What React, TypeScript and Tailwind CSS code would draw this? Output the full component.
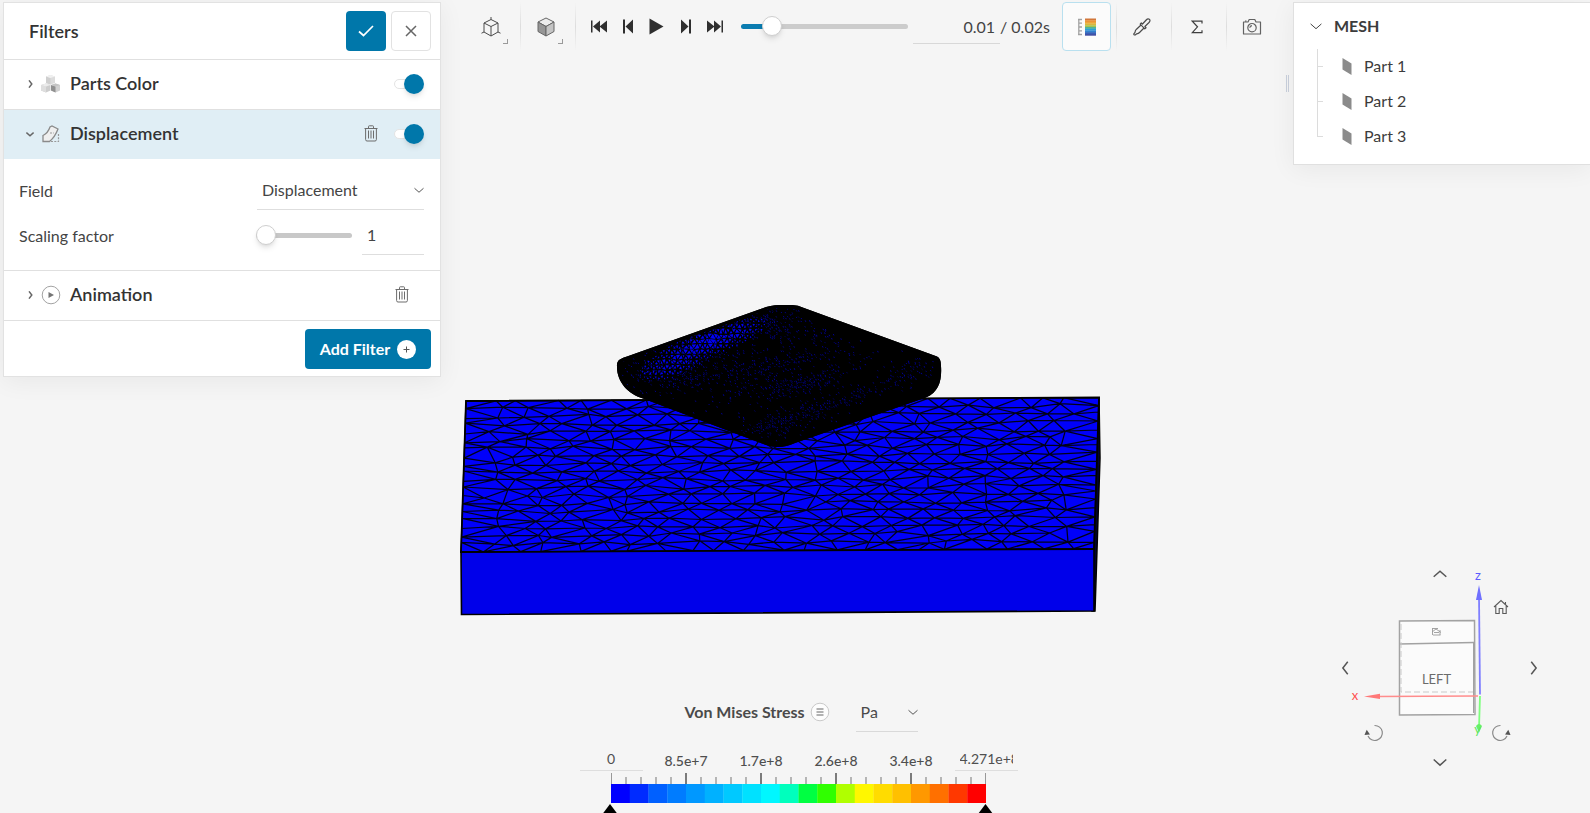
import React, { useState } from "react";

/* ---------- geometry helpers for the simulated mesh ---------- */

type Pt = [number, number];

function makeRandom(seed: number) {
  let s = seed;
  return () => {
    s = (s * 1664525 + 1013904223) % 4294967296;
    return s / 4294967296;
  };
}

function triangulate(points: Pt[]): number[][] {
  const n = points.length;
  const pts: Pt[] = [...points, [-3000, -3000], [6000, -3000], [10, 9000]];
  const circle = (a: number, b: number, c: number) => {
    const [ax, ay] = pts[a];
    const [bx, by] = pts[b];
    const [cx, cy] = pts[c];
    const d = 2 * (ax * (by - cy) + bx * (cy - ay) + cx * (ay - by)) || 1e-9;
    const a2 = ax * ax + ay * ay;
    const b2 = bx * bx + by * by;
    const c2 = cx * cx + cy * cy;
    const x = (a2 * (by - cy) + b2 * (cy - ay) + c2 * (ay - by)) / d;
    const y = (a2 * (cx - bx) + b2 * (ax - cx) + c2 * (bx - ax)) / d;
    return { v: [a, b, c], x, y, r: (ax - x) ** 2 + (ay - y) ** 2 };
  };
  let tris = [circle(n, n + 1, n + 2)];
  for (let i = 0; i < n; i++) {
    const [px, py] = pts[i];
    const edges = new Map<string, [number, number]>();
    const keep: typeof tris = [];
    for (const t of tris) {
      if ((px - t.x) ** 2 + (py - t.y) ** 2 < t.r) {
        for (let k = 0; k < 3; k++) {
          const a = t.v[k];
          const b = t.v[(k + 1) % 3];
          const key = a < b ? a + "_" + b : b + "_" + a;
          if (edges.has(key)) edges.delete(key);
          else edges.set(key, [a, b]);
        }
      } else keep.push(t);
    }
    edges.forEach(([a, b]) => keep.push(circle(a, b, i)));
    tris = keep;
  }
  return tris.filter((t) => t.v.every((k) => k < n)).map((t) => t.v);
}

function plateMeshPath() {
  const rnd = makeRandom(42);
  const cols = 22;
  const rows = 19;
  const pts: Pt[] = [];
  for (let r = 0; r <= rows; r++) {
    const edgeRow = r === 0 || r === rows;
    for (let c = 0; c <= cols; c++) {
      const edgeCol = c === 0 || c === cols;
      const shift = r % 2 && !edgeRow && !edgeCol ? 0.4 : 0;
      if (shift && c === cols - 1) continue;
      const x = c + (edgeCol ? 0 : shift + (rnd() - 0.5) * 0.6);
      const y = r * 0.78 + (edgeRow ? (rnd() - 0.5) * 0.0001 : (rnd() - 0.5) * 0.4);
      pts.push([x + rnd() * 0.00001, y]);
    }
  }
  const place = ([x, y]: Pt): string => {
    const u = x / cols;
    const v = y / (rows * 0.78);
    const left: Pt = [466 - 5 * v, 401 + 151 * v];
    const right: Pt = [1099 - 5 * v, 397.5 + 151 * v];
    return (
      (left[0] + (right[0] - left[0]) * u).toFixed(1) +
      " " +
      (left[1] + (right[1] - left[1]) * u).toFixed(1)
    );
  };
  return triangulate(pts)
    .map((t) => "M" + t.map((k) => place(pts[k])).join("L") + "Z")
    .join("");
}

function bump(x: number, y: number, cx: number, cy: number, sl: number, sw: number, deg: number) {
  const a = (deg * Math.PI) / 180;
  const dx = x - cx;
  const dy = y - cy;
  const l = dx * Math.cos(a) + dy * Math.sin(a);
  const w = -dx * Math.sin(a) + dy * Math.cos(a);
  return Math.exp(-(l * l) / (2 * sl * sl) - (w * w) / (2 * sw * sw));
}

function bodyFacets() {
  const rnd = makeRandom(7);
  let bright = "";
  let dim = "";
  const pts: Pt[] = [];
  for (let r = 0; r < 14; r++) {
    for (let c = 0; c < 26; c++) {
      const x = 640 + c * 5.4 + (r % 2) * 2.7 + (rnd() - 0.5) * 2.2;
      const y = 318 + r * 5.2 + (rnd() - 0.5) * 2;
      pts.push([x, y]);
    }
  }
  for (const t of triangulate(pts)) {
    const cx = (pts[t[0]][0] + pts[t[1]][0] + pts[t[2]][0]) / 3;
    const cy = (pts[t[0]][1] + pts[t[1]][1] + pts[t[2]][1]) / 3;
    const f = Math.max(
      bump(cx, cy, 708, 343, 36, 7.5, -20),
      0.75 * bump(cx, cy, 676, 361, 24, 9, -22),
    );
    if (f < 0.2) continue;
    const k = Math.min(0.78, 0.2 + f * 0.6) * (0.75 + rnd() * 0.35);
    bright +=
      "M" +
      t
        .map((i) => (cx + (pts[i][0] - cx) * k).toFixed(1) + " " + (cy + (pts[i][1] - cy) * k).toFixed(1))
        .join("L") +
      "Z";
  }
  const bands: number[][] = [
    [700, 348, 52, 15, -22, 0.45],
    [715, 374, 45, 6, -12, 0.3],
    [745, 385, 34, 9, -18, 0.2],
    [778, 320, 14, 11, 0, 0.25],
    [825, 342, 34, 8, 20, 0.25],
    [785, 360, 24, 6, -15, 0.3],
    [812, 380, 26, 6, -16, 0.5],
    [785, 388, 20, 5, -14, 0.4],
    [800, 414, 36, 8, -16, 0.4],
    [770, 425, 18, 6, -10, 0.35],
    [860, 392, 30, 5, -18, 0.3],
    [910, 370, 22, 8, -30, 0.3],
    [650, 368, 16, 9, -10, 0.2],
  ];
  for (let y = 308; y < 446; y += 2) {
    for (let x = 622; x < 938; x += 2.2) {
      let p = 0;
      for (const b of bands) p += b[5] * bump(x, y, b[0], b[1], b[2], b[3], b[4]);
      if (rnd() < p) {
        const h = (0.6 + rnd()).toFixed(1);
        dim += `M${(x + rnd()).toFixed(1)} ${(y + rnd()).toFixed(1)}l.6 ${h}`;
      }
    }
  }
  return { bright, dim };
}

const PLATE = plateMeshPath();
const BODY = bodyFacets();
const BODY_OUTLINE =
  "M617 367C616.500 360 620 359 627 356.500L762 308.500Q770 305 780 305H792Q798 305 804 308L937 356.500Q941 358 941 366C942 380 939 392 926 397.500L795 443Q780 450 766 445L643 398.500C628 394 617 382 617 367Z";

function Scene() {
  return (
    <svg
      viewBox="0 0 1590 813"
      preserveAspectRatio="xMidYMid slice"
      className="h-full w-full"
      role="img"
      aria-label="Deformed mesh"
    >
      <clipPath id="body-clip">
        <path d={BODY_OUTLINE} />
      </clipPath>
      <path d="M1099 397.500L1100 458L1095 611H1092V548Z" fill="#000033" stroke="#000" strokeWidth="1.500" />
      <path d="M461 551.500L1094 548.500V611L461.500 614.500Z" fill="#0000ea" stroke="#000" strokeWidth="1.600" />
      <path d="M466 401L1099 397.500L1094 549L461 552Z" fill="#0000fa" />
      <path d={PLATE} fill="none" stroke="#000018" strokeWidth="1.250" strokeLinejoin="round" />
      <path d="M466 401L1099 397.500L1094 549L461 552Z" fill="none" stroke="#000" strokeWidth="1.800" />
      <path d={BODY_OUTLINE} fill="#000" />
      <g clipPath="url(#body-clip)">
        <path d={BODY.dim} stroke="#0000b4" strokeWidth=".8" />
        <path d={BODY.bright} fill="#0000f5" />
        <path d={BODY_OUTLINE} fill="none" stroke="#000" strokeWidth="6" />
      </g>
    </svg>
  );
}

/* ---------- small icons ---------- */

type ChevronProps = { dir: "up" | "down" | "left" | "right"; className?: string };

function Chevron({ dir, className }: ChevronProps) {
  const d = {
    up: "M1 12.500L10 4.500L19 12.500",
    down: "M1 6.500L10 14.500L19 6.500",
    left: "M12.500 1L5.500 10L12.500 19",
    right: "M7.500 1L14.500 10L7.500 19",
  }[dir];
  return (
    <svg viewBox="0 0 20 20" className={className} fill="none" stroke="currentColor" aria-hidden="true">
      <path d={d} vectorEffect="non-scaling-stroke" />
    </svg>
  );
}

function TrashIcon() {
  return (
    <svg width="14" height="17" viewBox="0 0 14 17" fill="none" stroke="#6d6d6d" aria-hidden="true">
      <path d="M.5 3.500H13.500M4.500 3V1.500Q4.500 .8 5.200 .8H8.800Q9.500 .8 9.500 1.500V3M1.600 3.500V14.500Q1.600 16 3 16H11Q12.400 16 12.400 14.500V3.500" />
      <path d="M4.500 5.500V13.500M7 5.500V13.500M9.500 5.500V13.500" />
    </svg>
  );
}

function PartsIcon() {
  return (
    <svg width="20" height="18" viewBox="0 0 20 18" aria-hidden="true">
      <path d="M9.500 0L14 1.500V8L9.500 9.500L5 8V1.500Z" fill="#dcdcdc" />
      <path d="M5 1.500L9.500 3V9.500L5 8Z" fill="#cfcfcf" />
      <path d="M5 1.500L9.500 0L14 1.500L9.500 3Z" fill="#f0f0f0" />
      <path d="M0 10L5 8.500L9.500 10V15.500L5 17.500L0 15.500Z" fill="#cdcdcd" />
      <path d="M0 10L5 11.500V17.500L0 15.500Z" fill="#dedede" />
      <path d="M0 10L5 8.500L9.500 10L5 11.500Z" fill="#ececec" />
      <path d="M10 10L14.500 8.500L19 10V15.500L14.500 17.500L10 15.500Z" fill="#d0d0d0" />
      <path d="M10 10L14.500 11.500V17.500L10 15.500Z" fill="#909090" />
      <path d="M10 10L14.500 8.500L19 10L14.500 11.500Z" fill="#c4c4c4" />
    </svg>
  );
}

function DisplacementIcon() {
  return (
    <svg width="18" height="18" viewBox="0 0 18 18" fill="none" aria-hidden="true">
      <path d="M1 16.500V10.500Q6 8 8 2L10 1L16 4Q13 12 7.500 16.500Z" fill="#efefef" stroke="#8a8a8a" strokeWidth="1.300" />
      <path d="M8 8H12M9 16.500H17M16.500 9V17" stroke="#999" strokeWidth="1.200" strokeDasharray="2 1.300" />
    </svg>
  );
}

function PlayCircleIcon() {
  return (
    <svg width="20" height="20" viewBox="0 0 20 20" fill="none" aria-hidden="true">
      <circle cx="10" cy="10" r="8.800" stroke="#a3a3a3" />
      <path d="M7.500 7L13 10L7.500 13Z" fill="#757575" />
    </svg>
  );
}

function WireCubeIcon() {
  return (
    <svg width="20" height="22" viewBox="0 0 20 22" fill="none" stroke="#4a4a4a" aria-hidden="true">
      <path d="M10 3.500L17 7V16L10 20L3 16V7Z" />
      <path d="M3 7L10 10.500L17 7M10 10.500V20M10 1V3.500M3 16L.5 17.200M17 16L19.500 17.200" />
    </svg>
  );
}

function SolidCubeIcon() {
  return (
    <svg width="20" height="20" viewBox="0 0 20 20" stroke="#666" strokeLinejoin="round" aria-hidden="true">
      <path d="M10 1L18 5L10 9.500L2 5Z" fill="#ededed" />
      <path d="M2 5L10 9.500V19L2 14.500Z" fill="#969696" />
      <path d="M18 5L10 9.500V19L18 14.500Z" fill="#c4c4c4" />
    </svg>
  );
}

function ColorMapIcon() {
  const bands = ["#d2773a", "#e8923a", "#efa63a", "#d8b83e", "#a5c24e", "#4fb39a", "#2aa0d8", "#2f82cf", "#3565bb", "#4350a4"];
  return (
    <svg width="18" height="18" viewBox="0 0 18 18" aria-hidden="true">
      <path d="M.8 1V17M0 1.500H4M1 5.200H4M1 9H4M1 12.800H4M0 16.500H4" stroke="#a2a2a2" strokeWidth="1.300" />
      {bands.map((c, i) => (
        <rect key={c} x="7" y={0.5 + i * 1.7} width="11" height="1.900" fill={c} />
      ))}
    </svg>
  );
}

function PipetteIcon() {
  return (
    <svg width="18" height="18" viewBox="0 0 18 18" fill="none" stroke="#4a4a4a" strokeWidth="1.200" strokeLinejoin="round" aria-hidden="true">
      <path d="M8 7L3.500 11.200Q2.200 12.500 2 14.300L.8 15.800Q.7 17.200 2.200 17L3.700 15.800Q5.500 15.700 6.500 14.500L11 10" />
      <path d="M7.200 6.200L11.800 10.800L13 9.700L11.900 8.500L16 4.500Q17.800 2.300 16.300 1.200Q14.800 .2 13.200 2L9.500 6L8.300 5Z" />
    </svg>
  );
}

function SigmaIcon() {
  return (
    <svg width="12" height="14" viewBox="0 0 12 14" fill="none" stroke="#3f3f3f" strokeWidth="1.200" aria-hidden="true">
      <path d="M11 3.500V1.200H1.300L6.500 6.800L1.300 12.600H11V10.200" />
    </svg>
  );
}

function CameraIcon() {
  return (
    <svg width="20" height="18" viewBox="0 0 20 18" fill="none" stroke="#626262" strokeWidth="1.200" aria-hidden="true">
      <path d="M1.500 4H6L7.200 1.500H12.800L14 4H18.500V16H1.500Z" strokeLinejoin="round" />
      <circle cx="10" cy="9.700" r="4.200" />
      <path d="M7.800 9.800Q8 7.800 10 7.600" />
      <path d="M3 3.200H4.500" />
    </svg>
  );
}

/* ---------- filters panel ---------- */

function Toggle({ label }: { label: string }) {
  return (
    <label className="relative flex h-5 w-[30px] cursor-pointer items-center">
      <input type="checkbox" defaultChecked aria-label={label} className="peer sr-only" />
      <span className="h-[10px] w-6 rounded-full border border-[#e4e4e4] bg-white" />
      <span className="absolute left-0 size-5 rounded-full bg-[#aaa] shadow-md peer-checked:left-[10px] peer-checked:bg-[#0077aa]" />
    </label>
  );
}

type FilterRowProps = {
  title: string;
  icon: React.ReactNode;
  open?: boolean;
  children: React.ReactNode;
};

function FilterRow({ title, icon, open, children }: FilterRowProps) {
  return (
    <div
      className={
        open
          ? "flex h-[49px] items-center bg-[#e0eef5] pr-4 pb-[2px] pl-[19px]"
          : "flex h-[49px] items-center pr-4 pb-[2px] pl-[19px]"
      }
    >
      <button type="button" aria-expanded={!!open} className="flex flex-1 items-center text-left">
        <span className="flex w-[14px] justify-center text-[#666]">
          <Chevron dir={open ? "down" : "right"} className="size-2 stroke-[1.5px]" />
        </span>
        <span className="flex w-[33px] justify-center pr-[5px]">{icon}</span>
        <span className="text-[18px] font-semibold text-[#333]">{title}</span>
      </button>
      {children}
    </div>
  );
}

const sliderBase =
  "h-5 cursor-pointer appearance-none bg-transparent [&::-webkit-slider-runnable-track]:h-[5px] [&::-webkit-slider-runnable-track]:rounded-full [&::-webkit-slider-thumb]:-mt-2 [&::-webkit-slider-thumb]:size-5 [&::-webkit-slider-thumb]:appearance-none [&::-webkit-slider-thumb]:rounded-full [&::-webkit-slider-thumb]:border [&::-webkit-slider-thumb]:border-[#cfcfcf] [&::-webkit-slider-thumb]:bg-white [&::-webkit-slider-thumb]:shadow-md";

function FiltersPanel() {
  return (
    <section aria-label="Filters" className="mt-[2px] ml-[3px] w-[438px] shrink-0 self-start border border-[#e2e2e2] bg-white shadow-[0_4px_24px_rgba(0,0,0,0.06)]">
      <header className="flex h-[57px] items-center gap-[5px] border-b border-[#e0e0e0] pr-[9px] pl-[25px]">
        <h2 className="flex-1 text-[18px] font-semibold text-[#333]">Filters</h2>
        <button type="button" aria-label="Apply" className="flex size-10 items-center justify-center rounded bg-[#0077aa]">
          <svg width="16" height="12" viewBox="0 0 16 12" fill="none" stroke="#fff" strokeWidth="1.700" aria-hidden="true">
            <path d="M1 6.500L5.500 10.500L15 1" />
          </svg>
        </button>
        <button type="button" aria-label="Close" className="flex size-10 items-center justify-center rounded border border-[#e2e2e2] bg-white">
          <svg width="12" height="12" viewBox="0 0 12 12" stroke="#666" strokeWidth="1.500" aria-hidden="true">
            <path d="M1 1L11 11M11 1L1 11" />
          </svg>
        </button>
      </header>

      <div className="border-b border-[#e0e0e0]">
        <FilterRow title="Parts Color" icon={<PartsIcon />}>
          <Toggle label="Parts Color" />
        </FilterRow>
      </div>

      <FilterRow title="Displacement" icon={<DisplacementIcon />} open>
        <button type="button" aria-label="Delete Displacement" className="mr-4">
          <TrashIcon />
        </button>
        <Toggle label="Displacement" />
      </FilterRow>

      <div className="flex flex-col gap-[5px] border-b border-[#e0e0e0] pt-[11px] pr-4 pb-[15px] pl-[15px] text-[16px] text-[#444]">
        <div className="flex h-10 items-center">
          <label htmlFor="field" className="flex-1 pt-[2px]">Field</label>
          <div className="relative flex h-10 w-[167px] items-center border-b border-[#dedede]">
            <select id="field" defaultValue="Displacement" className="w-full appearance-none bg-transparent pl-[5px] outline-none">
              <option>Displacement</option>
            </select>
            <Chevron dir="down" className="pointer-events-none absolute right-0 size-[10px] text-[#555]" />
          </div>
        </div>
        <div className="flex h-10 items-center">
          <label htmlFor="factor" className="flex-1 pt-[2px]">Scaling factor</label>
          <input
            type="range"
            aria-label="Scaling factor slider"
            min={1}
            max={100}
            defaultValue={1}
            className={`${sliderBase} mr-[10px] w-24 [&::-webkit-slider-runnable-track]:bg-[#c8c8c8]`}
          />
          <input id="factor" defaultValue="1" className="h-10 w-[62px] border-b border-[#dedede] bg-transparent pl-[5px] outline-none" />
        </div>
      </div>

      <div className="border-b border-[#e0e0e0]">
        <FilterRow title="Animation" icon={<PlayCircleIcon />}>
          <button type="button" aria-label="Delete Animation" className="mr-[15px]">
            <TrashIcon />
          </button>
        </FilterRow>
      </div>

      <footer className="flex justify-end pt-2 pr-[9px] pb-[7px]">
        <button type="button" className="flex h-10 w-[126px] items-center justify-center gap-[7px] rounded bg-[#0077aa] text-[16px] font-bold text-white">
          Add Filter
          <svg width="19" height="19" viewBox="0 0 19 19" aria-hidden="true">
            <circle cx="9.500" cy="9.500" r="9.500" fill="#fff" />
            <path d="M9.500 6.500V12.500M6.500 9.500H12.500" stroke="#555" />
          </svg>
        </button>
      </footer>
    </section>
  );
}

/* ---------- toolbar ---------- */

function Divider() {
  return <span className="h-[49px] w-px bg-linear-to-b from-transparent via-[#dddddd] to-transparent" />;
}

const playback: { label: string; w: number; d: string }[] = [
  { label: "First frame", w: 18, d: "M1 2.500H2.500V14.500H1ZM10 2.500V14.500L3 8.500ZM17 2.500V14.500L9.500 8.500Z" },
  { label: "Previous frame", w: 12, d: "M1 1.500H3V15.500H1ZM11 1.500V15.500L3.500 8.500Z" },
  { label: "Play", w: 15, d: "M.5 .5L14.500 8.500L.5 16.500Z" },
  { label: "Next frame", w: 12, d: "M9 1.500H11V15.500H9ZM1 1.500V15.500L8.500 8.500Z" },
  { label: "Last frame", w: 18, d: "M15.500 2.500H17V14.500H15.500ZM8 2.500V14.500L15 8.500ZM1 2.500V14.500L8.500 8.500Z" },
];

function DropButton({ label, children }: { label: string; children: React.ReactNode }) {
  return (
    <button type="button" aria-label={label} className="relative mr-[5px] flex size-[49px] items-center justify-center">
      {children}
      <span className="absolute right-[7px] bottom-[7px] size-[5px] border-r border-b border-[#9a9a9a]" />
    </button>
  );
}

function Toolbar() {
  const [frame, setFrame] = useState(14);
  return (
    <nav aria-label="Viewer tools" className="flex flex-1 items-start pt-[2px] pl-[25px]">
      <div className="flex h-[49px] items-center">
        <DropButton label="View mode">
          <WireCubeIcon />
        </DropButton>
        <Divider />
        <DropButton label="Render mode">
          <SolidCubeIcon />
        </DropButton>
        <Divider />
        <div className="flex pl-2">
          {playback.map((b) => (
            <button key={b.label} type="button" aria-label={b.label} className="flex w-[29px] justify-center">
              <svg width={b.w} height="17" viewBox={`0 0 ${b.w} 17`} fill="#2f2f2f" aria-hidden="true">
                <path d={b.d} />
              </svg>
            </button>
          ))}
        </div>
        <input
          type="range"
          aria-label="Time step"
          min={0}
          max={100}
          value={frame}
          onChange={(e) => setFrame(Number(e.target.value))}
          className={`${sliderBase} ml-3 w-[167px] [&::-webkit-slider-runnable-track]:bg-linear-to-r [&::-webkit-slider-runnable-track]:from-[#0b7cb0] [&::-webkit-slider-runnable-track]:from-18% [&::-webkit-slider-runnable-track]:to-[#cccccc] [&::-webkit-slider-runnable-track]:to-18%`}
        />
        <label className="ml-[5px] flex items-center text-[16px] text-[#444]">
          <input
            aria-label="Current time"
            defaultValue="0.01"
            className="h-[34px] w-[87px] border-b border-[#d8d8d8] bg-transparent pr-[5px] text-right outline-none"
          />
          <span className="w-[62px]">/ 0.02s</span>
        </label>
        <button type="button" aria-label="Legend" aria-pressed="true" className="mr-[5px] flex size-[49px] items-center justify-center rounded border border-[#b9e0ef] bg-[#fbfbfb]">
          <ColorMapIcon />
        </button>
        <Divider />
        <button type="button" aria-label="Inspect point" className="mr-[5px] flex size-[49px] items-center justify-center">
          <PipetteIcon />
        </button>
        <Divider />
        <button type="button" aria-label="Statistics" className="mr-[5px] flex size-[49px] items-center justify-center">
          <SigmaIcon />
        </button>
        <Divider />
        <button type="button" aria-label="Screenshot" className="flex size-[49px] items-center justify-center">
          <CameraIcon />
        </button>
      </div>
    </nav>
  );
}

/* ---------- mesh tree ---------- */

function MeshPanel() {
  return (
    <aside className="flex w-[304px] shrink-0 items-start">
      <span className="mt-[75px] mr-1 h-[17px] w-[3px] border-x border-[#c9d0dc]" />
      <section aria-label="Mesh" className="mt-[2px] h-[163px] flex-1 border border-r-0 border-[#e0e0e0] bg-white pl-4 text-[16px] text-[#3c3c3c] shadow-[0_4px_24px_rgba(0,0,0,0.06)]">
        <button type="button" aria-expanded="true" className="flex h-[46px] items-center gap-3 font-bold">
          <Chevron dir="down" className="size-3 text-[#444]" />
          MESH
        </button>
        <ul className="ml-[7px]">
          {["Part 1", "Part 2", "Part 3"].map((part, i) => (
            <li key={part} className="flex h-[35px]">
              <span className="flex w-[6px] flex-col">
                <span className="h-[18px] border-b border-l border-[#dcdcdc]" />
                {i < 2 && <span className="flex-1 border-l border-[#dcdcdc]" />}
              </span>
              <a href="#part" className="flex h-[34px] items-center">
                <svg width="10" height="17" viewBox="0 0 10 17" className="mr-3 ml-[19px]" aria-hidden="true">
                  <path d="M.5 0L9.500 5.500V17L.5 11.500Z" fill="#8b8b8b" />
                </svg>
                {part}
              </a>
            </li>
          ))}
        </ul>
      </section>
    </aside>
  );
}

/* ---------- legend ---------- */

const scaleColors = [
  "#0000ff", "#002bff", "#0060ff", "#007cff", "#0098ff", "#00b1ff", "#00c9ff",
  "#00e1ff", "#00f7ff", "#00ffbd", "#00ff42", "#30ff00", "#b0ff00", "#fff700",
  "#ffdc00", "#ffc000", "#ff9800", "#ff7000", "#ff3800", "#ff0000",
];

function ColorScale() {
  return (
    <svg width="395" height="40" viewBox="-10 0 395 40" className="mx-auto block" role="img" aria-label="Color scale">
      {Array.from({ length: 26 }, (_, i) => {
        const end = i === 0 || i === 25;
        const major = i % 5 === 0;
        return (
          <rect
            key={i}
            x={end ? (i ? 374 : 0) : i * 15 - 1}
            y={major ? 0 : 4}
            width={end ? 1 : 2}
            height={major ? 11 : 7}
            fill={end ? "#999" : major ? "#7b7b7b" : "#b5b5b5"}
          />
        );
      })}
      {scaleColors.map((c, i) => (
        <rect key={c} x={i * 18.75} y="11" width={i < 19 ? 19 : 18.75} height="19" fill={c} />
      ))}
      <path d="M-1 31L6.500 41H-8.500Z" />
      <path d="M374.500 31L382 41H367Z" />
    </svg>
  );
}

function Legend() {
  return (
    <section aria-label="Legend" className="ml-[7px] w-[450px]">
      <div className="mb-[10px] flex h-[40px] items-center justify-center pl-[5px]">
        <h3 className="text-[16px] font-bold text-[#4a4a4a]">Von Mises Stress</h3>
        <button type="button" aria-label="Legend options" className="mr-[26px] ml-[5px]">
          <svg width="20" height="20" viewBox="0 0 20 20" fill="#fdfdfd" stroke="#c9c9c9" aria-hidden="true">
            <circle cx="10" cy="10" r="8.800" />
            <path d="M6.500 7H13.500M6.500 10H13.500M6.500 13H13.500" stroke="#666" />
          </svg>
        </button>
        <div className="relative flex h-[40px] w-[62px] items-center border-b border-[#d9d9d9] text-[16px] text-[#4a4a4a]">
          <select aria-label="Unit" defaultValue="Pa" className="w-full appearance-none bg-transparent pl-[5px] outline-none">
            <option>Pa</option>
          </select>
          <Chevron dir="down" className="pointer-events-none absolute right-0 size-[10px] text-[#555]" />
        </div>
      </div>
      <div className="mb-[2px] grid h-[29px] grid-cols-6 items-end justify-items-center text-[14px] text-[#4f4f4f]">
        <input aria-label="Minimum" defaultValue="0" className="h-[22px] w-[63px] border-b border-[#dedede] bg-transparent pb-[2px] text-center outline-none" />
        {["8.5e+7", "1.7e+8", "2.6e+8", "3.4e+8"].map((t) => (
          <span key={t} className="font-medium">{t}</span>
        ))}
        <input aria-label="Maximum" defaultValue="4.271e+8" className="h-[22px] w-[63px] border-b border-[#dedede] bg-transparent px-[5px] pb-[2px] outline-none" />
      </div>
      <ColorScale />
    </section>
  );
}

/* ---------- orientation cube ---------- */

function CubeDrawing() {
  return (
    <svg width="220" height="220" viewBox="1330 560 220 220" fill="none" className="font-['Lato',sans-serif]" role="img" aria-label="Orientation cube">
      <path d="M1399.500 621L1474.500 620.500L1475 714.500L1399.500 715Z" fill="#fbfbfb" stroke="#a2a2a2" strokeWidth="1.500" />
      <path d="M1399.500 644L1474 642.500" stroke="#a2a2a2" strokeWidth="1.500" />
      <path d="M1473.500 643V713" stroke="#a2a2a2" />
      <path d="M1401 624V692H1473" stroke="#c9c9c9" strokeDasharray="6 3" />
      <path d="M1480 694.500L1479 596" stroke="#8080ff" strokeWidth="1.800" />
      <path d="M1479 585L1482 600H1476Z" fill="#7070ff" />
      <path d="M1478 696L1376 696.500" stroke="#ff8c8c" strokeWidth="1.600" />
      <path d="M1364 696.500L1380 693.800V699Z" fill="#ff7878" />
      <path d="M1480 696L1479 728" stroke="#7dff7d" strokeWidth="1.800" />
      <path d="M1476 726Q1479 722 1482 726L1479 732.500Z" fill="#66f066" />
      <text x="1436.500" y="684" textAnchor="middle" fontSize="13" fill="#6b6b6b">LEFT</text>
      <g stroke="#9a9a9a" strokeWidth=".9">
        <path d="M1432 628.500H1438M1432.500 628.500V635M1432 632L1436 629L1441 632.500M1433 635H1440.500M1434 632.500H1439M1440 630V635" />
      </g>
      <text x="1478" y="580" textAnchor="middle" fontSize="13" fill="#5c5cff">z</text>
      <text x="1355" y="699.500" textAnchor="middle" fontSize="13" fill="#ff4d4d">x</text>
      <text x="1477.500" y="733.500" textAnchor="middle" fontSize="13" fill="#5de65d">y</text>
    </svg>
  );
}

function OrientationCube() {
  return (
    <div className="relative mr-10 mb-[33px] size-[220px] justify-self-end text-[#555]">
      <CubeDrawing />
      <button type="button" aria-label="Rotate up" className="absolute top-2 left-[103px]">
        <Chevron dir="up" className="size-[14px] stroke-[1.5px]" />
      </button>
      <button type="button" aria-label="Rotate left" className="absolute top-[101px] left-[9px]">
        <Chevron dir="left" className="size-[14px] stroke-[1.5px]" />
      </button>
      <button type="button" aria-label="Rotate right" className="absolute top-[101px] left-[196px]">
        <Chevron dir="right" className="size-[14px] stroke-[1.5px]" />
      </button>
      <button type="button" aria-label="Rotate down" className="absolute top-[195px] left-[103px]">
        <Chevron dir="down" className="size-[14px] stroke-[1.5px]" />
      </button>
      <button type="button" aria-label="Home view" className="absolute top-[39px] left-[163px]">
        <svg width="16" height="16" viewBox="0 0 16 16" fill="none" stroke="#5a5a5a" strokeWidth="1.100" aria-hidden="true">
          <path d="M1 8L8 1.500L15 8M2.800 7V14.500H6.200V9.500H9.800V14.500H13.200V7M12.500 5V3" />
        </svg>
      </button>
      <button type="button" aria-label="Roll counterclockwise" className="absolute top-[163px] left-[34px]">
        <svg width="20" height="20" viewBox="0 0 20 20" fill="none" stroke="#8a8a8a" strokeWidth="1.200" aria-hidden="true">
          <path d="M10.500 2.500A7.500 7.500 0 1 1 4 13" />
          <path d="M.5 12L2.700 6.800L6 11.500Z" fill="#555" stroke="none" />
        </svg>
      </button>
      <button type="button" aria-label="Roll clockwise" className="absolute top-[163px] left-[161px]">
        <svg width="20" height="20" viewBox="0 0 20 20" fill="none" stroke="#8a8a8a" strokeWidth="1.200" aria-hidden="true">
          <path d="M9.500 2.500A7.500 7.500 0 1 0 16 13" />
          <path d="M19.500 12L17.300 6.800L14 11.500Z" fill="#555" stroke="none" />
        </svg>
      </button>
    </div>
  );
}

export default function App() {
  return (
    <main className="grid h-screen grid-cols-1 grid-rows-1 overflow-hidden bg-[#f5f5f5] font-['Lato',sans-serif]">
      <div className="col-start-1 row-start-1 min-h-0 min-w-0">
        <Scene />
      </div>
      <div className="col-start-1 row-start-1 flex min-h-0 min-w-0 flex-col justify-between">
        <div className="flex items-start">
          <FiltersPanel />
          <Toolbar />
          <MeshPanel />
        </div>
        <div className="grid grid-cols-[1fr_auto_1fr] items-end">
          <span />
          <Legend />
          <OrientationCube />
        </div>
      </div>
    </main>
  );
}
